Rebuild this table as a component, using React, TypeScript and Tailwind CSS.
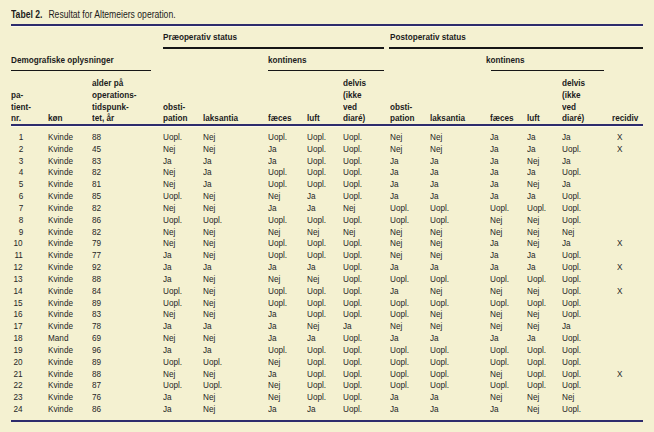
import React from 'react';

const cols =
  'grid grid-cols-[37px_44px_71px_40px_65px_39px_36px_47px_40px_60px_37px_35px_50px_31px]';

// smal skrift: Liberation Sans trykket sammen
const narrow = 'inline-block whitespace-nowrap origin-left scale-x-[0.86]';

type Row = [number, string, number, string, string, string, string, string, string, string, string, string, string, string];

const U = 'Uopl.';

const rows: Row[] = [
  [1, 'Kvinde', 88, U, 'Nej', U, U, U, 'Nej', 'Nej', 'Ja', 'Ja', 'Ja', 'X'],
  [2, 'Kvinde', 45, 'Nej', 'Nej', 'Ja', U, U, 'Nej', 'Nej', 'Ja', 'Ja', U, 'X'],
  [3, 'Kvinde', 83, 'Ja', 'Ja', 'Ja', U, U, 'Ja', 'Ja', 'Ja', 'Nej', 'Ja', ''],
  [4, 'Kvinde', 82, 'Nej', 'Ja', U, U, U, 'Ja', 'Ja', 'Ja', 'Ja', U, ''],
  [5, 'Kvinde', 81, 'Nej', 'Ja', U, U, U, 'Ja', 'Ja', 'Ja', 'Nej', 'Ja', ''],
  [6, 'Kvinde', 85, U, 'Nej', 'Nej', 'Ja', U, 'Ja', 'Ja', 'Ja', 'Ja', U, ''],
  [7, 'Kvinde', 82, 'Nej', 'Nej', 'Ja', 'Ja', 'Nej', U, U, U, U, U, ''],
  [8, 'Kvinde', 86, U, U, U, U, U, U, U, 'Nej', 'Nej', U, ''],
  [9, 'Kvinde', 82, 'Nej', 'Nej', 'Nej', 'Nej', 'Nej', 'Nej', 'Nej', 'Nej', 'Nej', 'Nej', ''],
  [10, 'Kvinde', 79, 'Nej', 'Nej', U, U, U, 'Nej', 'Nej', 'Ja', 'Nej', 'Ja', 'X'],
  [11, 'Kvinde', 77, 'Ja', 'Nej', U, U, U, 'Nej', 'Nej', 'Ja', 'Ja', U, ''],
  [12, 'Kvinde', 92, 'Ja', 'Ja', 'Ja', 'Ja', U, 'Ja', 'Ja', 'Ja', 'Ja', U, 'X'],
  [13, 'Kvinde', 88, 'Ja', 'Nej', 'Nej', 'Nej', U, U, U, U, U, U, ''],
  [14, 'Kvinde', 84, U, 'Nej', U, U, U, 'Ja', 'Nej', 'Nej', 'Nej', U, 'X'],
  [15, 'Kvinde', 89, U, 'Nej', U, U, U, U, U, U, U, U, ''],
  [16, 'Kvinde', 83, 'Nej', 'Nej', 'Ja', U, U, U, 'Nej', 'Nej', 'Nej', U, ''],
  [17, 'Kvinde', 78, 'Ja', 'Ja', 'Ja', 'Nej', 'Ja', 'Nej', 'Nej', 'Nej', 'Nej', 'Ja', ''],
  [18, 'Mand', 69, 'Nej', 'Nej', 'Ja', 'Ja', U, 'Ja', 'Ja', 'Ja', 'Ja', U, ''],
  [19, 'Kvinde', 96, 'Ja', 'Ja', U, U, U, U, U, U, U, U, ''],
  [20, 'Kvinde', 89, U, U, 'Nej', U, U, U, U, U, U, U, ''],
  [21, 'Kvinde', 88, 'Nej', 'Nej', 'Ja', U, U, U, U, 'Nej', U, U, 'X'],
  [22, 'Kvinde', 87, U, U, 'Nej', U, U, U, U, U, U, U, ''],
  [23, 'Kvinde', 76, 'Ja', 'Nej', 'Nej', U, U, 'Ja', 'Ja', 'Nej', 'Nej', 'Nej', ''],
  [24, 'Kvinde', 86, 'Ja', 'Nej', 'Ja', 'Ja', U, 'Ja', 'Ja', 'Ja', 'Nej', U, ''],
];

function Rule({ className = '' }: { className?: string }) {
  return <div className={`h-[1.5px] bg-[#161616] ${className}`} />;
}

function Stack({ lines }: { lines: string[] }) {
  return (
    <div className="flex flex-col justify-end">
      {lines.map((l) => (
        <span key={l} className={narrow}>
          {l}
        </span>
      ))}
    </div>
  );
}

export default function App() {
  return (
    <div
      className="w-[654px] h-[432px] overflow-hidden bg-[#f4f1d1] px-[11px] pt-[9px] text-[#1c1c1c]"
      style={{ fontFamily: '"Liberation Sans", Arial, sans-serif' }}
    >
      {/* titel */}
      <div className="h-[12px] leading-[12px] text-[10px] origin-left scale-x-[0.86] whitespace-nowrap">
        <span className="font-bold">Tabel 2.</span>
        <span className="ml-[7px]">Resultat for Altemeiers operation.</span>
      </div>
      <div className="mt-[3px] h-[2px] bg-[#2d2c6c]" />
      <div className="h-px bg-[#fbf9ea]" />

      {/* gruppeoverskrifter */}
      <div className={`${cols} mt-[4px] text-[9.5px] font-bold leading-[12px]`}>
        <div className="col-start-4 col-span-5">
          <div className={narrow}>Præoperativ status</div>
          <Rule className="mt-[4px] mr-[6px]" />
        </div>
        <div className="col-start-9 col-span-6">
          <div className={narrow}>Postoperativ status</div>
          <Rule className="mt-[4px] -ml-px" />
        </div>
      </div>

      <div className={`${cols} mt-[5px] text-[9.5px] font-bold leading-[12px]`}>
        <div className="col-start-1 col-span-3">
          <div className={narrow}>Demografiske oplysninger</div>
          <Rule className="mt-[4px] mr-[12px]" />
        </div>
        <div className="col-start-6 col-span-3">
          <div className={narrow}>kontinens</div>
          <Rule className="mt-[4px] mr-[6px]" />
        </div>
        <div className="col-start-11 col-span-3">
          <div className={`${narrow} -ml-[4px]`}>kontinens</div>
          <Rule className="mt-[4px] ml-px mr-[8px]" />
        </div>
      </div>

      {/* kolonneoverskrifter */}
      <div className={`${cols} mt-[6px] h-[47px] text-[9.5px] font-bold leading-[11.7px]`}>
        <Stack lines={['pa-', 'tient-', 'nr.']} />
        <Stack lines={['køn']} />
        <Stack lines={['alder på', 'operations-', 'tidspunk-', 'tet, år']} />
        <Stack lines={['obsti-', 'pation']} />
        <Stack lines={['laksantia']} />
        <Stack lines={['fæces']} />
        <Stack lines={['luft']} />
        <Stack lines={['delvis', '(ikke', 'ved', 'diaré)']} />
        <Stack lines={['obsti-', 'pation']} />
        <Stack lines={['laksantia']} />
        <Stack lines={['fæces']} />
        <Stack lines={['luft']} />
        <Stack lines={['delvis', '(ikke', 'ved', 'diaré)']} />
        <Stack lines={['recidiv']} />
      </div>
      <div className="h-[2px] bg-[#2d2c6c]" />
      <div className="h-px bg-[#fbf9ea]" />

      {/* data */}
      <div className="mt-[4px] text-[9.5px] leading-[11.83px] text-[#262626]">
        {rows.map((r) => (
          <div key={r[0]} className={cols}>
            <span className="pr-[25px] text-right">
              <span className="inline-block origin-right scale-x-[0.86]">{r[0]}</span>
            </span>
            {r.slice(1).map((v, i) => (
              <span key={i} className={i === 12 ? 'pl-[5px]' : ''}>
                <span className={narrow}>{v}</span>
              </span>
            ))}
          </div>
        ))}
      </div>
      <div className="mt-[5px] h-[2px] bg-[#2d2c6c]" />
    </div>
  );
}
